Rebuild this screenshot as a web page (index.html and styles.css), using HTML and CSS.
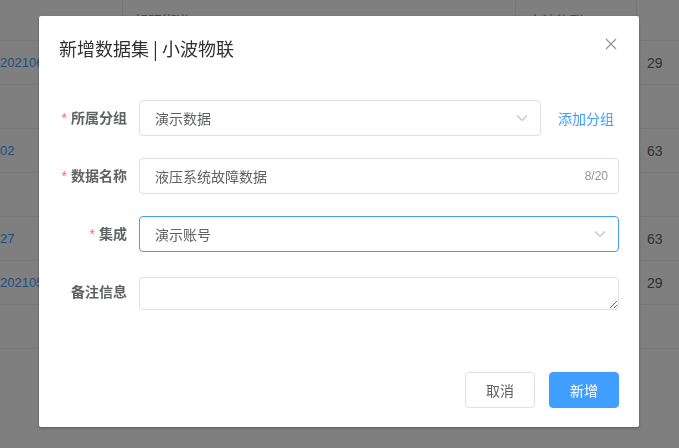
FILE: index.html
```html
<!DOCTYPE html>
<html lang="zh-CN">
<head>
<meta charset="utf-8">
<title>新增数据集</title>
<link rel="stylesheet" href="styles.css">
</head>
<body>
<div class="table">
  <div class="row head">
    <div class="c c1"></div>
    <div class="c c2">朝阳街道</div>
    <div class="c c3">小波物联</div>
    <div class="c c4"></div>
  </div>
  <div class="row">
    <div class="c c1"><span class="link">20210601</span></div>
    <div class="c c2"></div><div class="c c3"></div>
    <div class="c c4">29</div>
  </div>
  <div class="row">
    <div class="c c1"></div><div class="c c2"></div><div class="c c3"></div><div class="c c4"></div>
  </div>
  <div class="row">
    <div class="c c1"><span class="link">02</span></div>
    <div class="c c2"></div><div class="c c3"></div>
    <div class="c c4">63</div>
  </div>
  <div class="row">
    <div class="c c1"></div><div class="c c2"></div><div class="c c3"></div><div class="c c4"></div>
  </div>
  <div class="row">
    <div class="c c1"><span class="link">27</span></div>
    <div class="c c2"></div><div class="c c3"></div>
    <div class="c c4">63</div>
  </div>
  <div class="row">
    <div class="c c1"><span class="link">20210527</span></div>
    <div class="c c2"></div><div class="c c3"></div>
    <div class="c c4">29</div>
  </div>
  <div class="row">
    <div class="c c1"></div><div class="c c2"></div><div class="c c3"></div><div class="c c4"></div>
  </div>
</div>

<div class="mask"></div>

<div class="wrapper">
  <div class="dialog">
    <div class="dlg-head">
      <span class="dlg-title">新增数据集 | 小波物联</span>
      <span class="close">
        <svg width="16" height="16" viewBox="0 0 16 16"><path d="M3 3 L13 13 M13 3 L3 13" stroke="#909399" stroke-width="1.2" fill="none"/></svg>
      </span>
    </div>
    <div class="dlg-body">
      <div class="form-item">
        <label class="label"><span class="req">*</span>所属分组</label>
        <div class="content">
          <div class="input select">
            <span class="val">演示数据</span>
            <svg class="arrow" width="12" height="8" viewBox="0 0 12 8"><polyline points="1,1.5 6,6.5 11,1.5" stroke="#c0c4cc" stroke-width="1.2" fill="none"/></svg>
          </div>
          <span class="add-link">添加分组</span>
        </div>
      </div>
      <div class="form-item">
        <label class="label"><span class="req">*</span>数据名称</label>
        <div class="content">
          <div class="input grow">
            <span class="val">液压系统故障数据</span>
            <span class="count">8/20</span>
          </div>
        </div>
      </div>
      <div class="form-item">
        <label class="label"><span class="req">*</span>集成</label>
        <div class="content">
          <div class="input grow focus">
            <span class="val">演示账号</span>
            <svg class="arrow" width="12" height="8" viewBox="0 0 12 8"><polyline points="1,1.5 6,6.5 11,1.5" stroke="#c0c4cc" stroke-width="1.2" fill="none"/></svg>
          </div>
        </div>
      </div>
      <div class="form-item">
        <label class="label">备注信息</label>
        <div class="content top">
          <textarea class="textarea" rows="2"></textarea>
        </div>
      </div>
    </div>
    <div class="dlg-foot">
      <button class="btn">取消</button>
      <button class="btn primary">新增</button>
    </div>
  </div>
</div>
</body>
</html>
```

FILE: styles.css
```css
html, body {
  margin: 0;
  padding: 0;
  background: #fff;
  font-family: "Liberation Sans", "Noto Sans CJK SC", sans-serif;
  font-size: 14px;
  color: #606266;
  overflow: hidden;
}

.table {
  width: 679px;
}
.row {
  display: grid;
  grid-template-columns: 123px 393px 121px 1fr;
  height: 44px;
  box-sizing: border-box;
  border-bottom: 1px solid #ebeef5;
}
.row.head {
  height: 41px;
}
.c {
  display: flex;
  align-items: center;
  padding-left: 10px;
  overflow: hidden;
  white-space: nowrap;
}
.head .c {
  border-right: 1px solid #ebeef5;
  color: #909399;
  padding-left: 11px;
}
.head .c3 { padding-left: 12px; }
.head .c4 { border-right: none; }
.c1 { padding-left: 0; }
.head .c1 { padding-left: 0; }
.link {
  color: #409eff;
  font-size: 13px;
}
.c4 { color: #606266; }

.mask {
  position: fixed;
  inset: 0;
  background: rgba(0, 0, 0, 0.5);
}
.wrapper {
  position: fixed;
  inset: 0;
}
.dialog {
  width: 600px;
  margin: 16px 0 0 39px;
  background: #fff;
  border-radius: 2px;
  box-shadow: 0 1px 3px rgba(0, 0, 0, 0.3);
  position: relative;
}
.dlg-head {
  padding: 20px 20px 10px;
  position: relative;
}
.dlg-title {
  font-size: 18px;
  line-height: 24px;
  color: #303133;
  font-family: "Noto Sans CJK SC", sans-serif;
}
.close {
  position: absolute;
  top: 20px;
  right: 20px;
  width: 16px;
  height: 16px;
  display: block;
}
.close svg { display: block; }

.dlg-body {
  padding: 30px 20px;
}
.form-item {
  display: flex;
  margin-bottom: 22px;
  min-height: 36px;
}
.label {
  width: 80px;
  flex: none;
  box-sizing: border-box;
  padding-right: 12px;
  text-align: right;
  line-height: 36px;
  font-weight: 700;
  color: #606266;
  font-size: 14px;
}
.req {
  color: #f56c6c;
  margin-right: 4px;
  font-weight: 400;
}
.content {
  flex: 1;
  display: flex;
  align-items: center;
  min-width: 0;
}
.content.top {
  align-items: flex-start;
}
.input {
  height: 36px;
  box-sizing: border-box;
  border: 1px solid #dcdfe6;
  border-radius: 4px;
  padding: 0 15px;
  display: flex;
  align-items: center;
  color: #606266;
  font-size: 14px;
  position: relative;
}
.input.focus { border-color: #409eff; }
.select {
  width: 402px;
  flex: none;
}
.grow { flex: 1; }
.val {
  flex: 1;
  font-family: "Noto Sans CJK SC", sans-serif;
}
.arrow {
  position: absolute;
  right: 12px;
  top: 50%;
  margin-top: -4px;
}
.count {
  position: absolute;
  right: 10px;
  top: 0;
  bottom: 0;
  display: flex;
  align-items: center;
  font-size: 12px;
  color: #909399;
}
.add-link {
  margin-left: 17px;
  color: #409eff;
  font-size: 14px;
  white-space: nowrap;
  font-family: "Noto Sans CJK SC", sans-serif;
}
.textarea {
  display: block;
  width: 100%;
  height: 33px;
  margin-top: 3px;
  box-sizing: border-box;
  border: 1px solid #dcdfe6;
  border-radius: 4px;
  padding: 5px 15px;
  font-size: 14px;
  line-height: 1.5;
  font-family: inherit;
  color: #606266;
  resize: vertical;
  outline: none;
}

.dlg-foot {
  padding: 10px 20px 19px;
  display: flex;
  justify-content: flex-end;
  gap: 14px;
}
.btn {
  height: 36px;
  padding: 0 20px;
  box-sizing: border-box;
  border: 1px solid #dcdfe6;
  border-radius: 4px;
  background: #fff;
  color: #606266;
  font-size: 14px;
  font-family: "Noto Sans CJK SC", sans-serif;
  line-height: 1;
}
.btn.primary {
  background: #409eff;
  border-color: #409eff;
  color: #fff;
}
```
